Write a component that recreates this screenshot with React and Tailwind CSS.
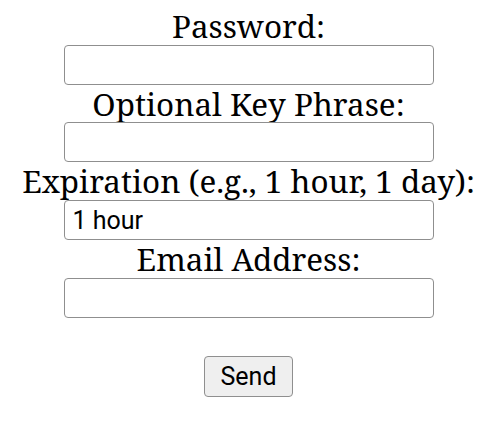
import React, { useState } from "react";

function Field({ label, value, onChange, type = "text" }) {
  return (
    <div className="flex flex-col items-center">
      <label className="block text-[31.4px] leading-[37.7px] text-black whitespace-nowrap">
        {label}
      </label>
      <input
        type={type}
        value={value}
        onChange={(e) => onChange(e.target.value)}
        className="w-[370px] h-[40px] border-[1.5px] border-[#8f8f8f] rounded-[4px] bg-white pl-[8px] text-[25px] text-black outline-none"
        style={{ fontFamily: "Roboto, 'Liberation Sans', sans-serif" }}
      />
    </div>
  );
}

export default function App() {
  const [password, setPassword] = useState("");
  const [keyPhrase, setKeyPhrase] = useState("");
  const [expiration, setExpiration] = useState("1 hour");
  const [email, setEmail] = useState("");

  return (
    <div
      className="min-h-screen bg-white pl-[4px] pt-[7px]"
      style={{ fontFamily: "'Noto Serif', 'DejaVu Serif Condensed', 'DejaVu Serif', serif" }}
    >
      <form
        onSubmit={(e) => e.preventDefault()}
        className="flex flex-col items-center"
      >
        <Field label="Password:" type="password" value={password} onChange={setPassword} />
        <Field label="Optional Key Phrase:" value={keyPhrase} onChange={setKeyPhrase} />
        <Field label="Expiration (e.g., 1 hour, 1 day):" value={expiration} onChange={setExpiration} />
        <Field label="Email Address:" type="email" value={email} onChange={setEmail} />

        {/* Send */}
        <button
          type="submit"
          className="mt-[38.5px] h-[41px] px-[15px] bg-[#efefef] border-[1.5px] border-[#8f8f8f] rounded-[4px] text-[25px] text-black"
          style={{ fontFamily: "Roboto, 'Liberation Sans', sans-serif" }}
        >
          Send
        </button>
      </form>
    </div>
  );
}
